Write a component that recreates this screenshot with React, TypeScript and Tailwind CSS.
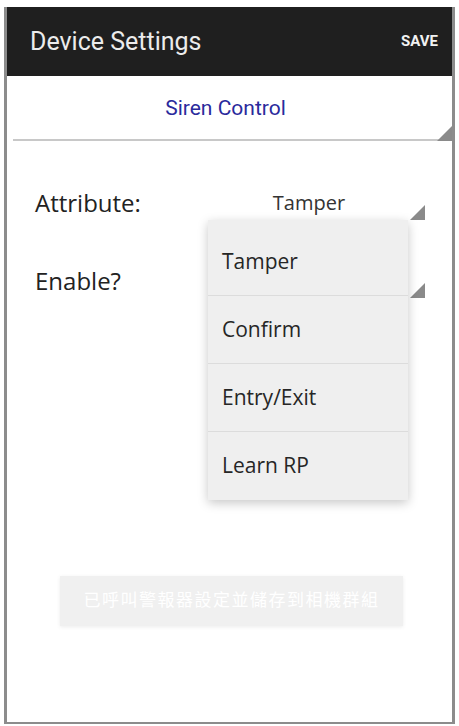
import React from 'react';

const roboto = { fontFamily: 'Roboto, "Noto Sans CJK TC", sans-serif' };
const openSans = { fontFamily: '"Open Sans", Roboto, sans-serif' };

function Corner({ className = '' }: { className?: string }) {
  return (
    <svg width="15" height="15" viewBox="0 0 15 15" className={className}>
      <polygon points="15,0 15,15 0,15" fill="#8a8a8a" />
    </svg>
  );
}

const options = ['Tamper', 'Confirm', 'Entry/Exit', 'Learn RP'];

export default function App() {
  return (
    <div className="w-[459px] h-[726px] bg-white pt-[7px] px-[4px]" style={roboto}>
      <div className="relative h-[717px] border-x-[3px] border-b-2 border-[#8c8c8c] flex flex-col">
        {/* Toolbar */}
        <div className="h-[69px] bg-[#1f1f1f] flex items-center justify-between pl-[23px] pr-[14px]">
          <span className="text-[25px] text-[#ececec]">Device Settings</span>
          <span className="text-[15px] font-bold text-[#f2f2f2]">SAVE</span>
        </div>

        {/* Device selector */}
        <div className="relative ml-[6px] h-[65px] flex flex-col">
          <div className="flex-1 flex items-center justify-center pr-[14px] pt-[2px]">
            <span className="text-[21px] text-[#2a2a9c]">Siren Control</span>
          </div>
          <div className="h-[2px] bg-[#c8c8c8] mr-[9px]" />
          <Corner className="absolute right-0 bottom-[0px]" />
        </div>

        {/* Attribute row */}
        <div className="flex items-center h-[80px] pt-[44px] pl-[28px] pr-[27px]" style={openSans}>
          <span className="text-[24px] text-[#222] w-[190px]">Attribute:</span>
          <div className="flex-1 flex justify-center">
            <span className="text-[20px] text-[#333] -ml-[32px]">Tamper</span>
          </div>
        </div>
        <div className="relative h-[8px]">
          <Corner className="absolute right-[27px] -top-[16px]" />
        </div>

        {/* Enable row */}
        <div className="flex items-center h-[60px] pt-[44px] pl-[28px]" style={openSans}>
          <span className="text-[24px] text-[#222]">Enable?</span>
        </div>
        <div className="relative">
          <Corner className="absolute right-[27px] -top-[6px]" />
        </div>

        <div className="flex-1" />

        {/* Action button */}
        <div className="ml-[53px] mr-[49px] mb-[96px] h-[50px] bg-[#f0f0f0] shadow-[0_1px_4px_rgba(0,0,0,0.08)] flex items-center justify-center">
          <span className="text-[17px] text-white tracking-[1.5px]">已呼叫警報器設定並儲存到相機群組</span>
        </div>

        {/* Dropdown menu */}
        <div
          className="absolute left-[201px] top-[213px] w-[200px] bg-[#efefef] pt-[8px] shadow-[0_3px_10px_rgba(0,0,0,0.22)]"
          style={openSans}
        >
          {options.map((o, i) => (
            <div
              key={o}
              className={`h-[68px] flex items-center pl-[14px] text-[21px] text-[#262626] ${
                i < options.length - 1 ? 'border-b border-[#dcdcdc]' : ''
              }`}
            >
              {o}
            </div>
          ))}
        </div>
      </div>
    </div>
  );
}
